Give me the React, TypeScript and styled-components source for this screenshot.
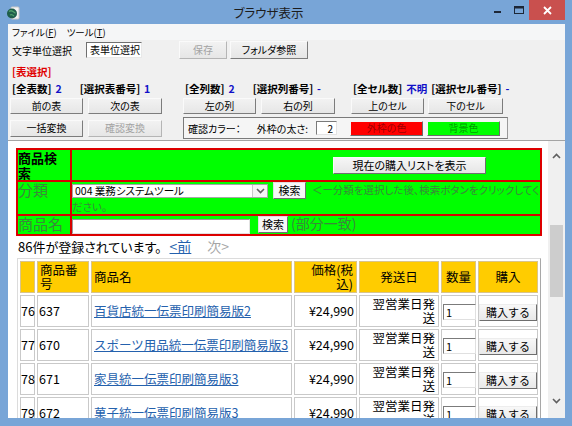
import styled, { createGlobalStyle } from "styled-components";

const GlobalStyle = createGlobalStyle`
  * { box-sizing: border-box; }
  html, body { margin: 0; padding: 0; background: #78a5d7; }
  body {
    font-family: "Noto Sans CJK JP", "Liberation Sans", sans-serif;
    font-feature-settings: "palt" 1;
    color: #000;
  }
  button, input { font-family: inherit; font-feature-settings: inherit; }
`;

const Frame = styled.div`
  width: 572px;
  height: 426px;
  display: flex;
  flex-direction: column;
  background: #78a5d7;
  overflow: hidden;
`;

const TitleBar = styled.div`
  height: 24px;
  flex: none;
  display: flex;
  align-items: flex-start;
  padding-left: 6px;
`;

const TitleIcon = styled.svg`
  flex: none;
  margin-top: 6px;
`;

const TitleText = styled.div`
  flex: 1;
  text-align: center;
  font-size: 12.5px;
  line-height: 25px;
  color: #1c1c1c;
  padding-left: 30px;
`;

const Caption = styled.div`
  display: flex;
  flex: none;
  margin-right: 7px;
`;

const CaptionButton = styled.div<{ $w: number; $danger?: boolean }>`
  width: ${(p) => p.$w}px;
  height: 20px;
  display: flex;
  align-items: center;
  justify-content: center;
  background: ${(p) => (p.$danger ? "#c9504e" : "transparent")};
`;

const Client = styled.div`
  flex: 1;
  min-height: 0;
  margin: 0 7px 8px 8px;
  background: #f0f0f0;
  display: flex;
  flex-direction: column;
  overflow: hidden;
`;

const MenuBar = styled.div`
  height: 16px;
  flex: none;
  display: flex;
  gap: 10px;
  padding-left: 4px;
  font-size: 9.5px;
  line-height: 17px;
  background: #f5f6f7;
`;

const Toolbar = styled.div`
  height: 20px;
  flex: none;
  display: flex;
  align-items: center;
  padding-left: 4px;
  font-size: 10px;
`;

const ToggleBox = styled.div`
  width: 56px;
  height: 16px;
  margin-left: 14px;
  background: #fff;
  border: 1px solid;
  border-color: #6f6f6f #e8e8e8 #e8e8e8 #6f6f6f;
  line-height: 14px;
  padding-left: 3px;
  font-size: 10px;
`;

const AppButton = styled.button<{ $w: number; $h?: number; $ml?: number }>`
  width: ${(p) => p.$w}px;
  height: ${(p) => p.$h ?? 17}px;
  margin-left: ${(p) => p.$ml ?? 0}px;
  padding: 0;
  font-size: 10px;
  line-height: 1;
  color: #000;
  background: linear-gradient(#f2f2f2, #e6e6e6);
  border: 1px solid;
  border-color: #fafafa #7c7c7c #7c7c7c #fafafa;
  &:disabled {
    color: #a3a3a3;
    border-color: #fafafa #b5b5b5 #b5b5b5 #fafafa;
  }
`;

const Panel = styled.div`
  flex: none;
  padding: 5px 0 0 2px;
  display: flex;
  flex-direction: column;
`;

const SectionTitle = styled.div`
  height: 14px;
  padding-left: 2px;
  font-size: 10.5px;
  font-weight: bold;
  line-height: 14px;
  color: #e00000;
`;

const PanelRow = styled.div<{ $mt: number; $h: number }>`
  display: grid;
  grid-template-columns: 173px 168px 1fr;
  align-items: center;
  margin-top: ${(p) => p.$mt}px;
  height: ${(p) => p.$h}px;
`;

const Group = styled.div<{ $gap: number }>`
  display: flex;
  align-items: center;
  gap: ${(p) => p.$gap}px;
`;

const Count = styled.span`
  font-size: 10.5px;
  font-weight: bold;
  line-height: 14px;
  white-space: nowrap;
  padding-left: 2px;
`;

const CountValue = styled.span`
  color: #1010c8;
  margin-left: 4px;
`;

const ColorBox = styled.div`
  grid-column: 2 / 4;
  width: 325px;
  height: 22px;
  display: flex;
  align-items: center;
  padding-left: 4px;
  background: #f5f5f5;
  border: 1px solid;
  border-color: #7a7a7a #9a9a9a #7a7a7a #7a7a7a;
  font-size: 10px;
`;

const BoxLabel = styled.span<{ $ml?: number }>`
  margin-left: ${(p) => p.$ml ?? 0}px;
  white-space: nowrap;
`;

const WidthInput = styled.input`
  width: 21px;
  height: 14px;
  margin-left: 8px;
  padding: 0 3px 0 0;
  border: 1px solid;
  border-color: #7a7a7a #e3e3e3 #e3e3e3 #7a7a7a;
  font-size: 10px;
  text-align: right;
  background: #fff;
`;

const SwatchButton = styled.button<{ $bg: string; $ml: number }>`
  width: 73px;
  height: 15px;
  margin-left: ${(p) => p.$ml}px;
  padding: 0;
  font-size: 10px;
  line-height: 1;
  background: ${(p) => p.$bg};
  color: rgba(0, 0, 0, 0.42);
  border: 1px solid;
  border-color: #f4f4f4 #6c6c6c #6c6c6c #f4f4f4;
`;

const Browser = styled.div`
  flex: 1;
  min-height: 0;
  margin-top: 1px;
  display: flex;
  background: #fff;
  border-top: 1px solid #a4a4a4;
  overflow: hidden;
`;

const Page = styled.div`
  flex: 1;
  min-width: 0;
  padding: 7px 0 0 8px;
  overflow: hidden;
`;

const SearchTable = styled.table`
  width: 526px;
  border-collapse: separate;
  border-spacing: 0;
  border: 1px solid #e00000;
  background: #00ff00;
`;

const SearchHead = styled.td<{ $h: number }>`
  width: 54px;
  height: ${(p) => p.$h}px;
  padding: 0 4px 0 0;
  border: 1px solid #d80000;
  vertical-align: top;
`;

const SearchBody = styled.td<{ $valign?: string }>`
  padding: 0;
  border: 1px solid #d80000;
  vertical-align: ${(p) => p.$valign ?? "middle"};
  font-size: 11px;
  line-height: 15px;
`;

const SearchTitle = styled.div`
  font-size: 13px;
  font-weight: bold;
  line-height: 15px;
`;

const FieldLabel = styled.div`
  font-size: 15px;
  line-height: 16px;
  color: #3b873b;
`;

const ListButton = styled.button`
  width: 153px;
  height: 17px;
  margin-left: 261px;
  padding: 0;
  font-size: 11px;
  line-height: 1;
  background: linear-gradient(#f6f6f6, #e6e6e6);
  border: 1px solid;
  border-color: #fafafa #6f6f6f #6f6f6f #fafafa;
`;

const SelectBox = styled.span`
  display: inline-flex;
  width: 196px;
  height: 14px;
  margin-top: 2px;
  vertical-align: top;
  background: #fff;
  border: 1px solid #a6a6a6;
  font-size: 10.5px;
  line-height: 12px;
`;

const SelectText = styled.span`
  flex: 1;
  padding-left: 2px;
`;

const SelectArrow = styled.span`
  width: 15px;
  display: flex;
  align-items: center;
  justify-content: center;
  border-left: 1px solid #c8c8c8;
  background: #f4f4f4;
`;

const SearchButton = styled.button<{ $w: number; $ml: number }>`
  width: ${(p) => p.$w}px;
  height: 17px;
  margin-left: ${(p) => p.$ml}px;
  padding: 0;
  vertical-align: top;
  font-size: 11px;
  line-height: 1;
  background: #f7f7f7;
  border: 1px solid;
  border-color: #e0e0e0 #707070 #707070 #e0e0e0;
`;

const Hint = styled.span<{ $size: number; $ml: number }>`
  margin-left: ${(p) => p.$ml}px;
  font-size: ${(p) => p.$size}px;
  color: #3b873b;
`;

const NameInput = styled.input`
  width: 178px;
  height: 15px;
  padding: 0;
  vertical-align: middle;
  background: #fff;
  border: 1px solid;
  border-color: #9a9a9a #e2e2e2 #e2e2e2 #9a9a9a;
`;

const CountLine = styled.div`
  height: 21px;
  padding-left: 2px;
  font-size: 13px;
  line-height: 21px;
`;

const PageLink = styled.a`
  margin-left: 8px;
  font-size: 14px;
  color: #2461ad;
  text-decoration: underline;
`;

const PageOff = styled.span`
  margin-left: 16px;
  font-size: 14px;
  color: #a6a6a6;
`;

const ProductTable = styled.table`
  width: 524px;
  margin: 1px 0 0 1px;
  table-layout: fixed;
  border-collapse: separate;
  border-spacing: 2px;
  border: 1px solid;
  border-color: #dcdcdc #a8a8a8 #a8a8a8 #dcdcdc;
  font-size: 12.5px;
  font-feature-settings: normal;
`;

const Col = styled.col<{ $w: number }>`
  width: ${(p) => p.$w}px;
`;

const Th = styled.th<{ $align?: string; $pad?: string }>`
  height: 32px;
  padding: ${(p) => p.$pad ?? "1px 2px"};
  background: #ffcc00;
  border: 1px solid #d9c48a;
  font-weight: normal;
  line-height: 14px;
  text-align: ${(p) => p.$align ?? "left"};
  vertical-align: middle;
`;

const Td = styled.td<{ $align?: string; $pad?: string }>`
  height: 32px;
  padding: ${(p) => p.$pad ?? "1px 2px"};
  border: 1px solid #c9c9c9;
  line-height: 14px;
  text-align: ${(p) => p.$align ?? "left"};
  vertical-align: middle;
  white-space: normal;
`;

const ProductLink = styled.a`
  color: #2461ad;
  text-decoration: underline;
  white-space: nowrap;
`;

const QtyInput = styled.input`
  width: 33px;
  height: 16px;
  padding: 0 0 0 2px;
  margin-top: 2px;
  font-size: 11px;
  background: #fff;
  border: 1px solid;
  border-color: #7b7b7b #e0e0e0 #e0e0e0 #7b7b7b;
`;

const BuyButton = styled.button`
  width: 58px;
  height: 17px;
  padding: 0;
  margin-top: 2px;
  font-size: 11px;
  line-height: 1;
  background: linear-gradient(#f8f8f8, #e8e8e8);
  border: 1px solid;
  border-color: #ededed #6e6e6e #6e6e6e #ededed;
`;

const ScrollBar = styled.div`
  width: 17px;
  flex: none;
  display: flex;
  flex-direction: column;
  padding: 6px 0 9px;
  background: #f0f0f0;
`;

const ScrollArrow = styled.div`
  height: 17px;
  flex: none;
  display: flex;
  align-items: center;
  justify-content: center;
`;

const ScrollTrack = styled.div`
  flex: 1;
  padding: 0 2px;
`;

const ScrollThumb = styled.div`
  height: 72px;
  margin-top: 61px;
  background: #cdcdcd;
`;

const products = [
  { no: 76, code: "637", name: "百貨店統一伝票印刷簡易版2" },
  { no: 77, code: "670", name: "スポーツ用品統一伝票印刷簡易版3" },
  { no: 78, code: "671", name: "家具統一伝票印刷簡易版3" },
  { no: 79, code: "672", name: "菓子統一伝票印刷簡易版3" },
];

function Chevron({ up }: { up?: boolean }) {
  return (
    <svg width="9" height="6" viewBox="0 0 9 6">
      <polyline
        points={up ? "1,5 4.5,1.5 8,5" : "1,1 4.5,4.5 8,1"}
        fill="none"
        stroke="#5f5f5f"
        strokeWidth="1.6"
      />
    </svg>
  );
}

export default function App() {
  return (
    <>
      <GlobalStyle />
      <Frame>
        <TitleBar>
          <TitleIcon width="14" height="14" viewBox="0 0 14 14">
            <rect x="5" y="1" width="8" height="12" rx="1" fill="#f4f4f4" stroke="#c9c9c9" />
            <circle cx="6" cy="7.5" r="5" fill="#1f5e4a" />
            <path d="M3 5.5 Q5 4 7 5.5 T9.5 7 M4 9 Q6 8 8 10" stroke="#4fa06a" strokeWidth="1.3" fill="none" />
          </TitleIcon>
          <TitleText>ブラウザ表示</TitleText>
          <Caption>
            <CaptionButton $w={21}>
              <svg width="8" height="8" viewBox="0 0 8 8">
                <rect x="0" y="5" width="7" height="2" fill="#1d2737" />
              </svg>
            </CaptionButton>
            <CaptionButton $w={21}>
              <svg width="10" height="9" viewBox="0 0 10 9">
                <rect x="0.5" y="0.5" width="9" height="7" fill="none" stroke="#1d2737" />
                <rect x="0.5" y="0.5" width="9" height="2" fill="#1d2737" />
              </svg>
            </CaptionButton>
            <CaptionButton $w={36} $danger>
              <svg width="9" height="9" viewBox="0 0 9 9">
                <path d="M1 1 L8 8 M8 1 L1 8" stroke="#fff" strokeWidth="1.8" />
              </svg>
            </CaptionButton>
          </Caption>
        </TitleBar>

        <Client>
          <MenuBar>
            <span>
              ファイル(<u>F</u>)
            </span>
            <span>
              ツール(<u>T</u>)
            </span>
          </MenuBar>

          <Toolbar>
            <span>文字単位選択</span>
            <ToggleBox>表単位選択</ToggleBox>
            <AppButton $w={48} $h={18} $ml={37} disabled>
              保存
            </AppButton>
            <AppButton $w={78} $h={18} $ml={3}>
              フォルダ参照
            </AppButton>
          </Toolbar>

          <Panel>
            <SectionTitle>[表選択]</SectionTitle>
            <PanelRow $mt={3} $h={14}>
              <Group $gap={16}>
                <Count>
                  [全表数]<CountValue>2</CountValue>
                </Count>
                <Count>
                  [選択表番号]<CountValue>1</CountValue>
                </Count>
              </Group>
              <Group $gap={16}>
                <Count>
                  [全列数]<CountValue>2</CountValue>
                </Count>
                <Count>
                  [選択列番号]<CountValue>-</CountValue>
                </Count>
              </Group>
              <Group $gap={2}>
                <Count>
                  [全セル数]<CountValue>不明</CountValue>
                </Count>
                <Count>
                  [選択セル番号]<CountValue>-</CountValue>
                </Count>
              </Group>
            </PanelRow>
            <PanelRow $mt={2} $h={16}>
              <Group $gap={5}>
                <AppButton $w={73} $h={16}>前の表</AppButton>
                <AppButton $w={74} $h={16}>次の表</AppButton>
              </Group>
              <Group $gap={5}>
                <AppButton $w={73} $h={16}>左の列</AppButton>
                <AppButton $w={74} $h={16}>右の列</AppButton>
              </Group>
              <Group $gap={4}>
                <AppButton $w={73} $h={16}>上のセル</AppButton>
                <AppButton $w={75} $h={16}>下のセル</AppButton>
              </Group>
            </PanelRow>
            <PanelRow $mt={3} $h={22}>
              <Group $gap={5}>
                <AppButton $w={73}>一括変換</AppButton>
                <AppButton $w={74} disabled>
                  確認変換
                </AppButton>
              </Group>
              <ColorBox>
                <BoxLabel>確認カラー：</BoxLabel>
                <BoxLabel $ml={16}>外枠の太さ:</BoxLabel>
                <WidthInput defaultValue="2" />
                <SwatchButton $bg="#ff0000" $ml={13}>
                  外枠の色
                </SwatchButton>
                <SwatchButton $bg="#00ff00" $ml={4}>
                  背景色
                </SwatchButton>
              </ColorBox>
            </PanelRow>
          </Panel>

          <Browser>
            <Page>
              <SearchTable>
                <tbody>
                  <tr>
                    <SearchHead $h={32}>
                      <SearchTitle>商品検索</SearchTitle>
                    </SearchHead>
                    <SearchBody>
                      <ListButton>現在の購入リストを表示</ListButton>
                    </SearchBody>
                  </tr>
                  <tr>
                    <SearchHead $h={32}>
                      <FieldLabel>分類</FieldLabel>
                    </SearchHead>
                    <SearchBody $valign="top">
                      <SelectBox>
                        <SelectText>004 業務システムツール</SelectText>
                        <SelectArrow>
                          <Chevron />
                        </SelectArrow>
                      </SelectBox>
                      <SearchButton $w={33} $ml={5}>
                        検索
                      </SearchButton>
                      <Hint $size={10.5} $ml={6}>
                        ＜ー分類を選択した後、検索ボタンをクリックしてください。
                      </Hint>
                    </SearchBody>
                  </tr>
                  <tr>
                    <SearchHead $h={20}>
                      <FieldLabel>商品名</FieldLabel>
                    </SearchHead>
                    <SearchBody>
                      <NameInput />
                      <SearchButton $w={30} $ml={8}>
                        検索
                      </SearchButton>
                      <Hint $size={14} $ml={3}>
                        (部分一致)
                      </Hint>
                    </SearchBody>
                  </tr>
                </tbody>
              </SearchTable>

              <CountLine>
                86件が登録されています。
                <PageLink>&lt;前</PageLink>
                <PageOff>次&gt;</PageOff>
              </CountLine>

              <ProductTable>
                <colgroup>
                  <Col $w={15} />
                  <Col $w={52} />
                  <Col $w={201} />
                  <Col $w={63} />
                  <Col $w={80} />
                  <Col $w={35} />
                  <Col $w={60} />
                </colgroup>
                <thead>
                  <tr>
                    <Th />
                    <Th>商品番号</Th>
                    <Th>商品名</Th>
                    <Th $align="right" $pad="1px 3px">
                      価格(税込)
                    </Th>
                    <Th $align="center">発送日</Th>
                    <Th $align="center">数量</Th>
                    <Th $align="center">購入</Th>
                  </tr>
                </thead>
                <tbody>
                  {products.map((p) => (
                    <tr key={p.no}>
                      <Td $pad="1px 0">{p.no}</Td>
                      <Td $pad="1px 1px">{p.code}</Td>
                      <Td $pad="1px 0 1px 2px">
                        <ProductLink>{p.name}</ProductLink>
                      </Td>
                      <Td $align="right">¥24,990</Td>
                      <Td $align="right" $pad="1px 3px">
                        翌営業日発送
                      </Td>
                      <Td $pad="1px 0 1px 1px">
                        <QtyInput defaultValue="1" />
                      </Td>
                      <Td $align="center" $pad="1px 0">
                        <BuyButton>購入する</BuyButton>
                      </Td>
                    </tr>
                  ))}
                </tbody>
              </ProductTable>
            </Page>
            <ScrollBar>
              <ScrollArrow>
                <Chevron up />
              </ScrollArrow>
              <ScrollTrack>
                <ScrollThumb />
              </ScrollTrack>
              <ScrollArrow>
                <Chevron />
              </ScrollArrow>
            </ScrollBar>
          </Browser>
        </Client>
      </Frame>
    </>
  );
}
